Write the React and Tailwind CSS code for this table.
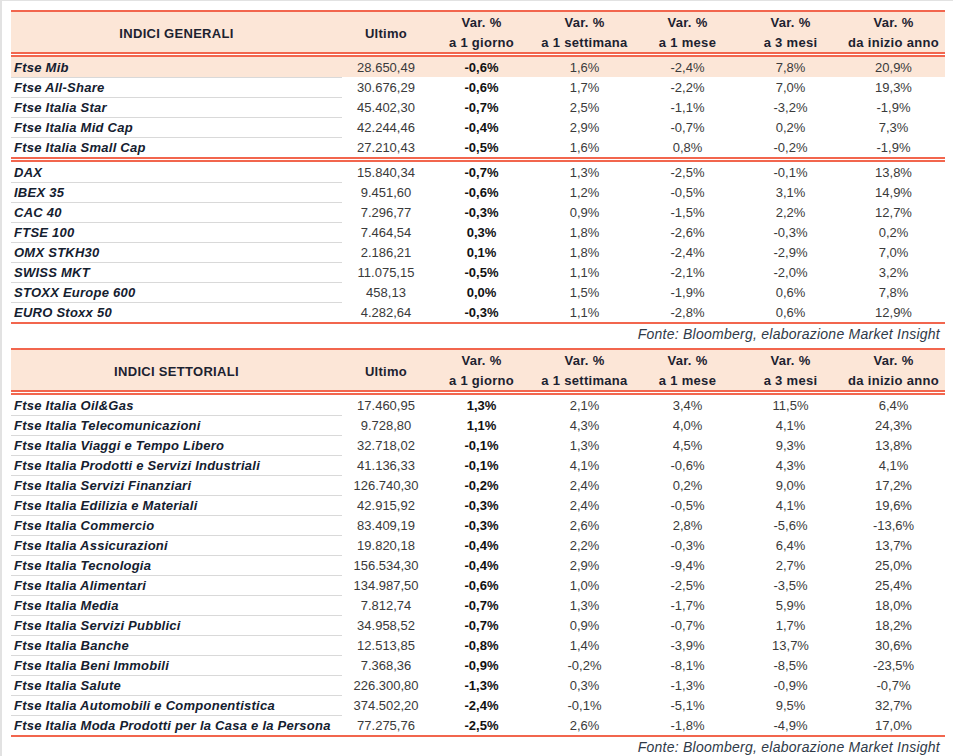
const generali = [
  [
    ["Ftse Mib", "28.650,49", "-0,6%", "1,6%", "-2,4%", "7,8%", "20,9%", true],
    ["Ftse All-Share", "30.676,29", "-0,6%", "1,7%", "-2,2%", "7,0%", "19,3%"],
    ["Ftse Italia Star", "45.402,30", "-0,7%", "2,5%", "-1,1%", "-3,2%", "-1,9%"],
    ["Ftse Italia Mid Cap", "42.244,46", "-0,4%", "2,9%", "-0,7%", "0,2%", "7,3%"],
    ["Ftse Italia Small Cap", "27.210,43", "-0,5%", "1,6%", "0,8%", "-0,2%", "-1,9%"],
  ],
  [
    ["DAX", "15.840,34", "-0,7%", "1,3%", "-2,5%", "-0,1%", "13,8%"],
    ["IBEX 35", "9.451,60", "-0,6%", "1,2%", "-0,5%", "3,1%", "14,9%"],
    ["CAC 40", "7.296,77", "-0,3%", "0,9%", "-1,5%", "2,2%", "12,7%"],
    ["FTSE 100", "7.464,54", "0,3%", "1,8%", "-2,6%", "-0,3%", "0,2%"],
    ["OMX STKH30", "2.186,21", "0,1%", "1,8%", "-2,4%", "-2,9%", "7,0%"],
    ["SWISS MKT", "11.075,15", "-0,5%", "1,1%", "-2,1%", "-2,0%", "3,2%"],
    ["STOXX Europe 600", "458,13", "0,0%", "1,5%", "-1,9%", "0,6%", "7,8%"],
    ["EURO Stoxx 50", "4.282,64", "-0,3%", "1,1%", "-2,8%", "0,6%", "12,9%"],
  ],
];

const settoriali = [
  [
    ["Ftse Italia Oil&Gas", "17.460,95", "1,3%", "2,1%", "3,4%", "11,5%", "6,4%"],
    ["Ftse Italia Telecomunicazioni", "9.728,80", "1,1%", "4,3%", "4,0%", "4,1%", "24,3%"],
    ["Ftse Italia Viaggi e Tempo Libero", "32.718,02", "-0,1%", "1,3%", "4,5%", "9,3%", "13,8%"],
    ["Ftse Italia Prodotti e Servizi Industriali", "41.136,33", "-0,1%", "4,1%", "-0,6%", "4,3%", "4,1%"],
    ["Ftse Italia Servizi Finanziari", "126.740,30", "-0,2%", "2,4%", "0,2%", "9,0%", "17,2%"],
    ["Ftse Italia Edilizia e Materiali", "42.915,92", "-0,3%", "2,4%", "-0,5%", "4,1%", "19,6%"],
    ["Ftse Italia Commercio", "83.409,19", "-0,3%", "2,6%", "2,8%", "-5,6%", "-13,6%"],
    ["Ftse Italia Assicurazioni", "19.820,18", "-0,4%", "2,2%", "-0,3%", "6,4%", "13,7%"],
    ["Ftse Italia Tecnologia", "156.534,30", "-0,4%", "2,9%", "-9,4%", "2,7%", "25,0%"],
    ["Ftse Italia Alimentari", "134.987,50", "-0,6%", "1,0%", "-2,5%", "-3,5%", "25,4%"],
    ["Ftse Italia Media", "7.812,74", "-0,7%", "1,3%", "-1,7%", "5,9%", "18,0%"],
    ["Ftse Italia Servizi Pubblici", "34.958,52", "-0,7%", "0,9%", "-0,7%", "1,7%", "18,2%"],
    ["Ftse Italia Banche", "12.513,85", "-0,8%", "1,4%", "-3,9%", "13,7%", "30,6%"],
    ["Ftse Italia Beni Immobili", "7.368,36", "-0,9%", "-0,2%", "-8,1%", "-8,5%", "-23,5%"],
    ["Ftse Italia Salute", "226.300,80", "-1,3%", "0,3%", "-1,3%", "-0,9%", "-0,7%"],
    ["Ftse Italia Automobili e Componentistica", "374.502,20", "-2,4%", "-0,1%", "-5,1%", "9,5%", "32,7%"],
    ["Ftse Italia Moda Prodotti per la Casa e la Persona", "77.275,76", "-2,5%", "2,6%", "-1,8%", "-4,9%", "17,0%"],
  ],
];

const cols = "grid grid-cols-[331px_88px_repeat(5,103px)]";

function DoubleLine() {
  return <div className="h-[5px] border-y-2 border-[#f2664e] bg-white" />;
}

function Header({ title }) {
  const vars = ["a 1 giorno", "a 1 settimana", "a 1 mese", "a 3 mesi", "da inizio anno"];
  return (
    <div className={`${cols} h-[40px] bg-[#fce6d7] font-bold text-[13px] text-[#1c2230] tracking-[0.3px]`}>
      <div className="flex items-center justify-center pt-[2px]">{title}</div>
      <div className="flex items-center justify-center pt-[2px]">Ultimo</div>
      {vars.map((v) => (
        <div key={v} className="flex flex-col items-center pt-[1px] leading-[20px]">
          <span>Var. %</span>
          <span>{v}</span>
        </div>
      ))}
    </div>
  );
}

function Row({ r, last }) {
  const [name, ultimo, g, s, m, t, a, hl] = r;
  return (
    <div className={`${cols} h-[20px] pt-[1px] text-[13px] leading-[19px] ${hl ? "bg-[#fce6d7]" : ""}`}>
      <div
        className={`pl-[3px] font-bold italic text-[#14202f] tracking-[0.25px] whitespace-nowrap ${
          last ? "" : "border-b border-[#d9d9d9]"
        }`}
      >
        {name}
      </div>
      <div className="text-center text-[#3a3a3a]">{ultimo}</div>
      <div className="text-center font-bold text-[#111]">{g}</div>
      <div className="text-center text-[#3a3a3a]">{s}</div>
      <div className="text-center text-[#3a3a3a]">{m}</div>
      <div className="text-center text-[#3a3a3a]">{t}</div>
      <div className="text-center text-[#3a3a3a]">{a}</div>
    </div>
  );
}

function Table({ title, groups }) {
  return (
    <div className="w-[934px]">
      <div className="border-t-2 border-[#f2664e]" />
      <Header title={title} />
      {groups.map((rows, gi) => (
        <div key={gi}>
          <DoubleLine />
          {rows.map((r, i) => (
            <Row key={r[0]} r={r} last={i === rows.length - 1} />
          ))}
        </div>
      ))}
      <div className="border-t-2 border-[#f2664e]" />
      <div className="h-[20px] pr-[5px] text-right italic text-[14px] leading-[20px] tracking-[0.25px] text-[#2f3a48]">
        Fonte: Bloomberg, elaborazione Market Insight
      </div>
    </div>
  );
}

export default function App() {
  return (
    <div
      className="min-h-screen bg-white border-t border-l-2 border-[#e2e2e2] pt-[9px] pl-[9px]"
      style={{ fontFamily: '"Liberation Sans", Arial, sans-serif' }}
    >
      <div className="flex flex-col gap-[4px]">
        <Table title="INDICI GENERALI" groups={generali} />
        <Table title="INDICI SETTORIALI" groups={settoriali} />
      </div>
    </div>
  );
}
